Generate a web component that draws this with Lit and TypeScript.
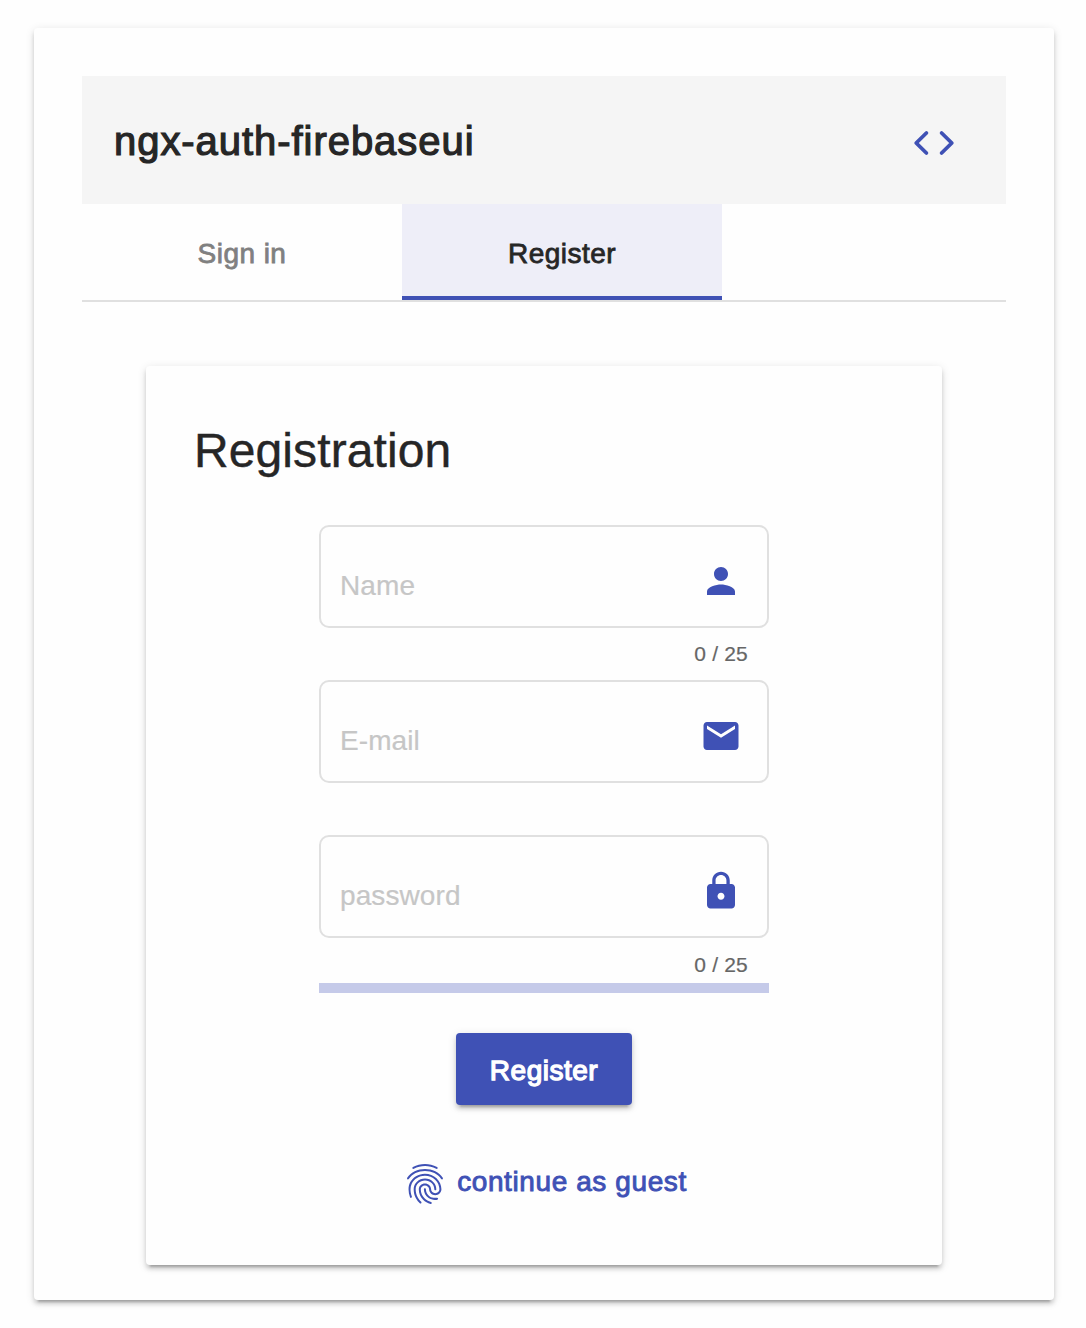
import { LitElement, html, css, svg } from "lit";
import { customElement, property, state } from "lit/decorators.js";
import { classMap } from "lit/directives/class-map.js";

const ICONS: Record<string, string> = {
  person:
    "M12 12c2.21 0 4-1.79 4-4s-1.79-4-4-4-4 1.79-4 4 1.79 4 4 4zm0 2c-2.67 0-8 1.34-8 4v2h16v-2c0-2.66-5.33-4-8-4z",
  email:
    "M20 4H4c-1.1 0-1.99.9-1.99 2L2 18c0 1.1.9 2 2 2h16c1.1 0 2-.9 2-2V6c0-1.1-.9-2-2-2zm0 4l-8 5-8-5V6l8 5 8-5v2z",
  lock: "M18 8h-1V6c0-2.76-2.24-5-5-5S7 3.24 7 6v2H6c-1.1 0-2 .9-2 2v10c0 1.1.9 2 2 2h12c1.1 0 2-.9 2-2V10c0-1.1-.9-2-2-2zm-6 9c-1.1 0-2-.9-2-2s.9-2 2-2 2 .9 2 2-.9 2-2 2zm3.1-9H8.9V6c0-1.71 1.39-3.1 3.1-3.1 1.71 0 3.1 1.39 3.1 3.1v2z",
  fingerprint:
    "M17.81 4.47c-.08 0-.16-.02-.23-.06C15.66 3.42 14 3 12.01 3c-1.98 0-3.86.47-5.57 1.41-.24.13-.54.04-.68-.2-.13-.24-.04-.55.2-.68C7.82 2.52 9.86 2 12.01 2c2.13 0 3.99.47 6.03 1.52.25.13.34.43.21.67-.09.18-.26.28-.44.28zM3.5 9.72c-.1 0-.2-.03-.29-.09-.23-.16-.28-.47-.12-.7.99-1.4 2.25-2.5 3.75-3.27C9.98 4.04 14 4.03 17.15 5.65c1.5.77 2.76 1.86 3.75 3.25.16.22.11.54-.12.7-.23.16-.54.11-.7-.12-.9-1.26-2.04-2.25-3.39-2.94-2.87-1.47-6.54-1.47-9.4.01-1.36.7-2.5 1.7-3.4 2.96-.08.14-.23.21-.39.21zm6.25 12.07c-.13 0-.26-.05-.35-.15-.87-.87-1.34-1.43-2.01-2.64-.69-1.23-1.05-2.73-1.05-4.34 0-2.97 2.54-5.39 5.66-5.39s5.66 2.42 5.66 5.39c0 .28-.22.5-.5.5s-.5-.22-.5-.5c0-2.42-2.09-4.39-4.66-4.39-2.57 0-4.66 1.97-4.66 4.39 0 1.44.32 2.77.93 3.85.64 1.15 1.08 1.64 1.85 2.42.19.2.19.51 0 .71-.11.1-.24.15-.37.15zm7.17-1.85c-1.19 0-2.24-.3-3.1-.89-1.49-1.01-2.38-2.65-2.38-4.39 0-.28.22-.5.5-.5s.5.22.5.5c0 1.41.72 2.74 1.94 3.56.71.48 1.54.71 2.54.71.24 0 .64-.03 1.04-.1.27-.05.53.13.58.41.05.27-.13.53-.41.58-.57.11-1.07.12-1.21.12zM14.91 22c-.04 0-.09-.01-.13-.02-1.59-.44-2.63-1.03-3.72-2.1-1.4-1.39-2.17-3.24-2.17-5.22 0-1.62 1.38-2.94 3.08-2.94 1.7 0 3.08 1.32 3.08 2.94 0 1.07.93 1.94 2.08 1.94s2.08-.87 2.08-1.94c0-3.77-3.25-6.83-7.25-6.83-2.84 0-5.44 1.58-6.61 4.03-.39.81-.59 1.76-.59 2.8 0 .78.07 2.01.67 3.61.1.26-.03.55-.29.64-.26.1-.55-.04-.64-.29-.49-1.31-.73-2.61-.73-3.96 0-1.2.23-2.29.68-3.24 1.33-2.79 4.28-4.6 7.51-4.6 4.55 0 8.25 3.51 8.25 7.83 0 1.62-1.38 2.94-3.08 2.94s-3.08-1.32-3.08-2.94c0-1.07-.93-1.94-2.08-1.94s-2.08.87-2.08 1.94c0 1.71.66 3.31 1.87 4.51.95.94 1.86 1.46 3.27 1.85.27.07.42.35.35.61-.05.23-.26.38-.47.38z",
};

@customElement("ui-icon")
export class UiIcon extends LitElement {
  @property() name = "";

  static styles = css`
    :host {
      display: block;
      width: 48px;
      height: 48px;
      flex: none;
      color: #3f51b5;
    }
    .glyph {
      display: block;
      width: 100%;
      height: 100%;
      fill: currentColor;
    }
    .line {
      fill: none;
      stroke: currentColor;
      stroke-width: 1.9;
      stroke-linecap: round;
      stroke-linejoin: round;
    }
  `;

  render() {
    const shape =
      this.name === "code"
        ? svg`<path class="line" d="M8.2 7L3.1 12l5.1 5M15.8 7l5.1 5-5.1 5"></path>`
        : svg`<path d=${ICONS[this.name] ?? ""}></path>`;
    return html`<svg class="glyph" viewBox="0 0 24 24" aria-hidden="true">
      ${shape}
    </svg>`;
  }
}

@customElement("outline-field")
export class OutlineField extends LitElement {
  @property() label = "";
  @property() icon = "";
  @property() hint = "";

  static styles = css`
    :host {
      display: block;
      height: 155px;
    }
    .box {
      box-sizing: border-box;
      display: flex;
      align-items: center;
      justify-content: space-between;
      height: 103px;
      padding: 8px 25px 0 19px;
      border: 2px solid #e0e0e0;
      border-radius: 10px;
    }
    .label {
      padding-top: 10px;
      font-size: 28px;
      line-height: 32px;
      letter-spacing: 0.1px;
      color: #c6c6c6;
      -webkit-text-stroke: 0.2px currentColor;
    }
    .icon {
      width: 42px;
      height: 42px;
    }
    .hint {
      padding: var(--hint-gap, 14px) 21px 0 0;
      font-size: 21px;
      line-height: 24px;
      letter-spacing: 0.2px;
      text-align: right;
      color: #666;
      -webkit-text-stroke: 0.2px currentColor;
    }
  `;

  render() {
    return html`
      <div class="box">
        <span class="label">${this.label}</span>
        <ui-icon class="icon" name=${this.icon}></ui-icon>
      </div>
      <div class="hint">${this.hint}</div>
    `;
  }
}

@customElement("app-root")
export class AppRoot extends LitElement {
  @state() private selected = "Register";

  static styles = css`
    :host {
      display: block;
      box-sizing: border-box;
      width: 1086px;
      height: 1328px;
      padding: 28px 32px 28px 34px;
      background: #fefefe;
      font-family: "Liberation Sans", Arial, sans-serif;
      color: #262626;
    }
    .card {
      box-sizing: border-box;
      border-radius: 4px;
      background: #fefefe;
      box-shadow: 0 6px 2px -4px rgba(0, 0, 0, 0.2),
        0 4px 4px 0 rgba(0, 0, 0, 0.14), 0 2px 10px 0 rgba(0, 0, 0, 0.12);
    }
    .outer {
      width: 1020px;
      height: 1272px;
      padding: 48px;
    }
    .toolbar {
      box-sizing: border-box;
      display: flex;
      align-items: center;
      justify-content: space-between;
      height: 128px;
      padding: 6px 48px 0 32px;
      background: #f5f5f5;
    }
    .title {
      margin: 0;
      padding-bottom: 4px;
      font-size: 40px;
      font-weight: 400;
      line-height: 48px;
      letter-spacing: 0.95px;
      -webkit-text-stroke: 1.2px currentColor;
    }
    .tabs {
      display: flex;
      height: 96px;
      border-bottom: 2px solid #e0e0e0;
    }
    .tab {
      box-sizing: border-box;
      display: flex;
      align-items: center;
      justify-content: center;
      width: 320px;
      padding-top: 8px;
      border: 0;
      border-bottom: 4px solid transparent;
      background: none;
      font: 28px/32px "Liberation Sans", Arial, sans-serif;
      letter-spacing: 0.45px;
      color: #808080;
      -webkit-text-stroke: 0.8px currentColor;
    }
    .tab.active {
      border-bottom-color: #3f51b5;
      background: #eeeef8;
      color: #262626;
    }
    .inner {
      width: 796px;
      height: 899px;
      margin: 64px 0 0 64px;
      padding: 57px 48px 0;
    }
    .heading {
      margin: 0;
      font-size: 48px;
      font-weight: 400;
      line-height: 56px;
      letter-spacing: 0.1px;
      -webkit-text-stroke: 0.4px currentColor;
    }
    .form {
      width: 450px;
      margin: 46px auto 0;
      display: flex;
      flex-direction: column;
      align-items: stretch;
    }
    .password {
      --hint-gap: 15px;
    }
    .strength {
      height: 10px;
      margin-top: -7px;
      background: #c5cae9;
    }
    .actions {
      display: flex;
      flex-direction: column;
      align-items: center;
    }
    .submit {
      width: 176px;
      height: 72px;
      margin-top: 40px;
      padding: 4px 0 0;
      border: 0;
      border-radius: 4px;
      background: #3f51b5;
      color: #fff;
      font: 28px/32px "Liberation Sans", Arial, sans-serif;
      letter-spacing: 0.5px;
      -webkit-text-stroke: 1.3px currentColor;
      box-shadow: 0 6px 2px -4px rgba(0, 0, 0, 0.2),
        0 4px 4px 0 rgba(0, 0, 0, 0.14), 0 2px 10px 0 rgba(0, 0, 0, 0.12);
    }
    .guest {
      display: flex;
      align-items: center;
      gap: 8px;
      margin: 55px 0 0;
      padding: 0;
      border: 0;
      background: none;
      color: #3f51b5;
      font: 28px/32px "Liberation Sans", Arial, sans-serif;
      letter-spacing: 0.6px;
      -webkit-text-stroke: 0.9px currentColor;
    }
    .guest-label {
      padding-bottom: 4px;
    }
  `;

  private tab(name: string) {
    return html`<button
      class=${classMap({ tab: true, active: this.selected === name })}
      @click=${() => (this.selected = name)}
    >
      ${name}
    </button>`;
  }

  render() {
    return html`
      <main class="card outer">
        <header class="toolbar">
          <h1 class="title">ngx-auth-firebaseui</h1>
          <ui-icon name="code"></ui-icon>
        </header>
        <nav class="tabs">${this.tab("Sign in")}${this.tab("Register")}</nav>
        <section class="card inner">
          <h2 class="heading">Registration</h2>
          <div class="form">
            <outline-field label="Name" icon="person" hint="0 / 25"></outline-field>
            <outline-field label="E-mail" icon="email"></outline-field>
            <outline-field
              class="password"
              label="password"
              icon="lock"
              hint="0 / 25"
            ></outline-field>
            <div class="strength"></div>
          </div>
          <div class="actions">
            <button class="submit">Register</button>
            <button class="guest">
              <ui-icon name="fingerprint"></ui-icon>
              <span class="guest-label">continue as guest</span>
            </button>
          </div>
        </section>
      </main>
    `;
  }
}
